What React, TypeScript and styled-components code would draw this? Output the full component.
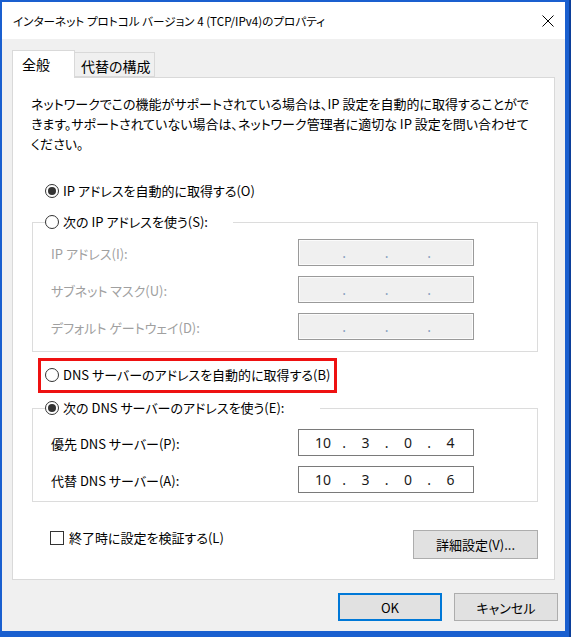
import React from "react";
import styled, { createGlobalStyle } from "styled-components";

const Global = createGlobalStyle`
  html, body { margin: 0; padding: 0; }
  body {
    width: 571px;
    height: 637px;
    overflow: hidden;
    background: #1a5fcf;
    font-family: "Noto Sans CJK JP", "Noto Sans", sans-serif;
    font-feature-settings: "palt";
    color: #000;
  }
`;

const Frame = styled.div`
  width: 571px;
  height: 637px;
  box-sizing: border-box;
  padding: 2px 6px 6px 2px;
  background: #1a5fcf;
  border-right: 2px solid #0c3f9a;
`;

const Window = styled.div`
  width: 563px;
  height: 629px;
  display: flex;
  flex-direction: column;
  background: #f0f0f0;
`;

const TitleBar = styled.div`
  height: 37px;
  flex: none;
  background: #fff;
  display: flex;
  align-items: center;
  justify-content: space-between;
  padding-left: 11px;
`;

const Title = styled.div`
  font-size: 11.6px;
  color: #000;
  white-space: nowrap;
`;

const CloseBox = styled.div`
  width: 34px;
  height: 37px;
  display: flex;
  align-items: center;
  justify-content: center;
`;

const Body = styled.div`
  flex: 1;
  display: flex;
  flex-direction: column;
  padding: 11px 10px 0 10px;
`;

const Tabs = styled.div`
  display: flex;
  align-items: flex-end;
  height: 27px;
`;

const Tab = styled.div<{ $active?: boolean; $w: number }>`
  box-sizing: border-box;
  width: ${(p) => p.$w}px;
  height: ${(p) => (p.$active ? 28 : 25)}px;
  margin-bottom: ${(p) => (p.$active ? -1 : 0)}px;
  position: relative;
  z-index: ${(p) => (p.$active ? 1 : 0)};
  background: ${(p) => (p.$active ? "#fff" : "#f0f0f0")};
  border: 1px solid #d9d9d9;
  border-bottom: ${(p) => (p.$active ? "none" : "1px solid #d9d9d9")};
  border-left: ${(p) => (p.$active ? "1px solid #d9d9d9" : "none")};
  font-size: 14px;
  line-height: 26px;
  padding-left: ${(p) => (p.$active ? 9 : 6)}px;
  white-space: nowrap;
`;

const Panel = styled.div`
  box-sizing: border-box;
  height: 503px;
  background: #fff;
  border: 1px solid #d9d9d9;
  padding: 16px 16px 0 19px;
  display: flex;
  flex-direction: column;
`;

const Description = styled.p`
  margin: 0 0 0 -1px;
  font-size: 13px;
  line-height: 20px;
  white-space: nowrap;
`;

const RadioRow = styled.label<{ $mt: number }>`
  display: flex;
  align-items: center;
  gap: 4px;
  height: 20px;
  margin-top: ${(p) => p.$mt}px;
  margin-left: 13px;
  font-size: 13px;
  line-height: 20px;
  white-space: nowrap;
`;

const RadioCircle = styled.span<{ $on?: boolean }>`
  box-sizing: border-box;
  width: 14px;
  height: 14px;
  flex: none;
  border-radius: 50%;
  border: 1px solid #333;
  background: #fff;
  display: flex;
  align-items: center;
  justify-content: center;
  &::after {
    content: "";
    width: 8px;
    height: 8px;
    border-radius: 50%;
    background: ${(p) => (p.$on ? "#333" : "transparent")};
  }
`;

const Group = styled.fieldset<{ $mt: number; $pt: number; $pb: number }>`
  margin: ${(p) => p.$mt}px 0 0 0;
  padding: 0 0 ${(p) => p.$pb}px 18px;
  border: 1px solid #dcdcdc;
  width: 506px;
  box-sizing: border-box;
  min-width: 0;
  & > div {
    margin-top: ${(p) => p.$pt}px;
  }
`;

const Legend = styled.legend<{ $w: number }>`
  padding: 0;
  margin-left: -6px;
  width: ${(p) => p.$w}px;
  height: 20px;
  display: flex;
  align-items: center;
  gap: 4px;
  font-size: 13px;
  line-height: 20px;
  white-space: nowrap;
`;

const Fields = styled.div`
  display: grid;
  grid-template-columns: 247px 176px;
  row-gap: 10px;
  align-items: center;
`;

const FieldLabel = styled.span<{ $disabled?: boolean }>`
  font-size: 13px;
  line-height: 20px;
  padding-top: 3px;
  color: ${(p) => (p.$disabled ? "#a0a0a0" : "#000")};
  white-space: nowrap;
`;

const IpBox = styled.div<{ $disabled?: boolean }>`
  box-sizing: border-box;
  width: 176px;
  height: 27px;
  border: 1px solid ${(p) => (p.$disabled ? "#9a9a9a" : "#7a7a7a")};
  background: ${(p) => (p.$disabled ? "#f0f0f0" : "#fff")};
  box-shadow: ${(p) => (p.$disabled ? "inset 0 0 0 1px #fbfbfb" : "none")};
  display: grid;
  grid-template-columns: 34px 8.5px 34px 8.5px 34px 8.5px 34px;
  padding-left: 7px;
  align-items: center;
  font-family: "Noto Sans", "DejaVu Sans", sans-serif;
  font-size: 14px;
  color: #1a1a1a;
`;

const Octet = styled.span`
  text-align: center;
  line-height: 25px;
`;

const Dot = styled.span<{ $disabled?: boolean }>`
  text-align: center;
  line-height: 25px;
  color: ${(p) => (p.$disabled ? "#8aa0c0" : "#1a1a1a")};
`;

const Highlight = styled.div`
  margin: 6px 0 0 6px;
  width: 299px;
  box-sizing: border-box;
  border: 3px solid #ee1111;
  padding: 4px 4px 5px 4px;
`;

const HighlightRow = styled.label`
  display: flex;
  align-items: center;
  gap: 4px;
  height: 20px;
  font-size: 13px;
  line-height: 20px;
  white-space: nowrap;
`;

const BottomRow = styled.div`
  margin-top: 28px;
  width: 506px;
  display: flex;
  justify-content: space-between;
  align-items: flex-start;
`;

const CheckRow = styled.label`
  margin: 1px 0 0 18px;
  display: flex;
  align-items: center;
  gap: 5px;
  font-size: 13px;
  line-height: 14px;
  white-space: nowrap;
`;

const CheckBox = styled.span`
  box-sizing: border-box;
  width: 14px;
  height: 14px;
  border: 1px solid #333;
  background: #fff;
`;

const Button = styled.div<{ $w: number; $default?: boolean; $h?: number }>`
  box-sizing: border-box;
  width: ${(p) => p.$w}px;
  height: ${(p) => p.$h ?? 28}px;
  background: #e1e1e1;
  border: ${(p) => (p.$default ? "2px solid #0078d7" : "1px solid #adadad")};
  display: flex;
  align-items: center;
  justify-content: center;
  font-size: 13px;
  white-space: nowrap;
`;

const ButtonRow = styled.div`
  margin: 13px -3px 0 0;
  display: flex;
  justify-content: flex-end;
  gap: 12px;
`;

function Ip({ value, disabled }: { value?: string[]; disabled?: boolean }) {
  const parts = value ?? ["", "", "", ""];
  return (
    <IpBox $disabled={disabled}>
      <Octet>{parts[0]}</Octet>
      <Dot $disabled={disabled}>.</Dot>
      <Octet>{parts[1]}</Octet>
      <Dot $disabled={disabled}>.</Dot>
      <Octet>{parts[2]}</Octet>
      <Dot $disabled={disabled}>.</Dot>
      <Octet>{parts[3]}</Octet>
    </IpBox>
  );
}

export default function App() {
  return (
    <>
      <Global />
      <Frame>
        <Window>
          <TitleBar>
            <Title>インターネット プロトコル バージョン 4 (TCP/IPv4)のプロパティ</Title>
            <CloseBox>
              <svg width="12" height="12" viewBox="0 0 12 12">
                <path d="M0.5 0.5 L11.5 11.5 M11.5 0.5 L0.5 11.5" stroke="#000" strokeWidth="1" fill="none" />
              </svg>
            </CloseBox>
          </TitleBar>
          <Body>
            <Tabs>
              <Tab $active $w={63}>全般</Tab>
              <Tab $w={80}>代替の構成</Tab>
            </Tabs>
            <Panel>
              <Description>
                ネットワークでこの機能がサポートされている場合は、IP 設定を自動的に取得することがで
                <br />
                きます。サポートされていない場合は、ネットワーク管理者に適切な IP 設定を問い合わせて
                <br />
                ください。
              </Description>
              <RadioRow $mt={27}>
                <RadioCircle $on />
                IP アドレスを自動的に取得する(O)
              </RadioRow>
              <Group $mt={11} $pt={7} $pb={11}>
                <Legend $w={188}>
                  <RadioCircle />
                  次の IP アドレスを使う(S):
                </Legend>
                <Fields>
                  <FieldLabel $disabled>IP アドレス(I):</FieldLabel>
                  <Ip disabled />
                  <FieldLabel $disabled>サブネット マスク(U):</FieldLabel>
                  <Ip disabled />
                  <FieldLabel $disabled>デフォルト ゲートウェイ(D):</FieldLabel>
                  <Ip disabled />
                </Fields>
              </Group>
              <Highlight>
                <HighlightRow>
                  <RadioCircle />
                  DNS サーバーのアドレスを自動的に取得する(B)
                </HighlightRow>
              </Highlight>
              <Group $mt={5} $pt={11} $pb={8}>
                <Legend $w={275}>
                  <RadioCircle $on />
                  次の DNS サーバーのアドレスを使う(E):
                </Legend>
                <Fields>
                  <FieldLabel>優先 DNS サーバー(P):</FieldLabel>
                  <Ip value={["10", "3", "0", "4"]} />
                  <FieldLabel>代替 DNS サーバー(A):</FieldLabel>
                  <Ip value={["10", "3", "0", "6"]} />
                </Fields>
              </Group>
              <BottomRow>
                <CheckRow>
                  <CheckBox />
                  終了時に設定を検証する(L)
                </CheckRow>
                <Button $w={125} $h={29}>詳細設定(V)...</Button>
              </BottomRow>
            </Panel>
            <ButtonRow>
              <Button $w={104} $default>OK</Button>
              <Button $w={104}>キャンセル</Button>
            </ButtonRow>
          </Body>
        </Window>
      </Frame>
    </>
  );
}
